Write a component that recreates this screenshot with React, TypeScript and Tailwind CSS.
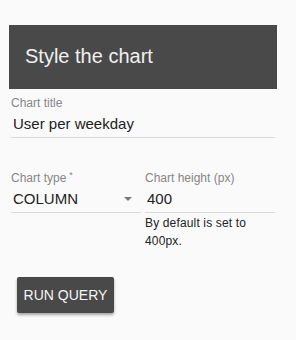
import React from "react";

const font = { fontFamily: "'Liberation Sans', Arial, sans-serif" };

function Field({ label, value, required, helper, select, className }: {
    label: string;
    value: string;
    required?: boolean;
    helper?: string;
    select?: boolean;
    className?: string;
}) {
    return (
        <div className={className}>
            <div className="flex h-[14px] items-start text-[12px] leading-[14px] text-[#868686]">
                {label}
                {required && <span className="ml-[3px] text-[9px] leading-[9px]">*</span>}
            </div>
            <div className="flex items-center border-b border-[#dadada] pl-[2px] pt-[5px] pb-[4px]">
                <span className="flex-1 text-[15px] leading-[18px] text-[#222]">{value}</span>
                {select && (
                    <svg width="8" height="4" viewBox="0 0 8 4" className="mr-[9px]">
                        <path d="M0 0h8L4 4z" fill="#7a7a7a" />
                    </svg>
                )}
            </div>
            {helper && (
                <div className="mt-[1px] text-[12px] leading-[18px] tracking-[0.15px] text-[#222]">
                    {helper}
                </div>
            )}
        </div>
    );
}

export default function App() {
    return (
        <div className="min-h-[340px] w-[296px] bg-[#fafafa] pt-[25px]" style={font}>
            <div className="ml-[9px] flex h-[64px] w-[268px] items-center bg-[#494949] pb-[2px] pl-[16px]">
                <h2 className="text-[20px] font-normal text-[#f0f0f0]">Style the chart</h2>
            </div>

            <Field className="ml-[11px] mt-[7px] w-[264px]" label="Chart title" value="User per weekday" />

            <div className="ml-[11px] mt-[33px] flex w-[264px] gap-[4px]">
                <Field className="w-[130px]" label="Chart type" required value="COLUMN" select />
                <Field className="w-[130px]" label="Chart height (px)" value="400" helper="By default is set to 400px." />
            </div>

            <button className="ml-[17px] mt-[27px] h-[36px] w-[97px] rounded-[2px] bg-[#494949] text-[14px] text-[#f5f5f5] shadow-[0_2px_3px_rgba(0,0,0,0.35)]">
                RUN QUERY
            </button>
        </div>
    );
}
